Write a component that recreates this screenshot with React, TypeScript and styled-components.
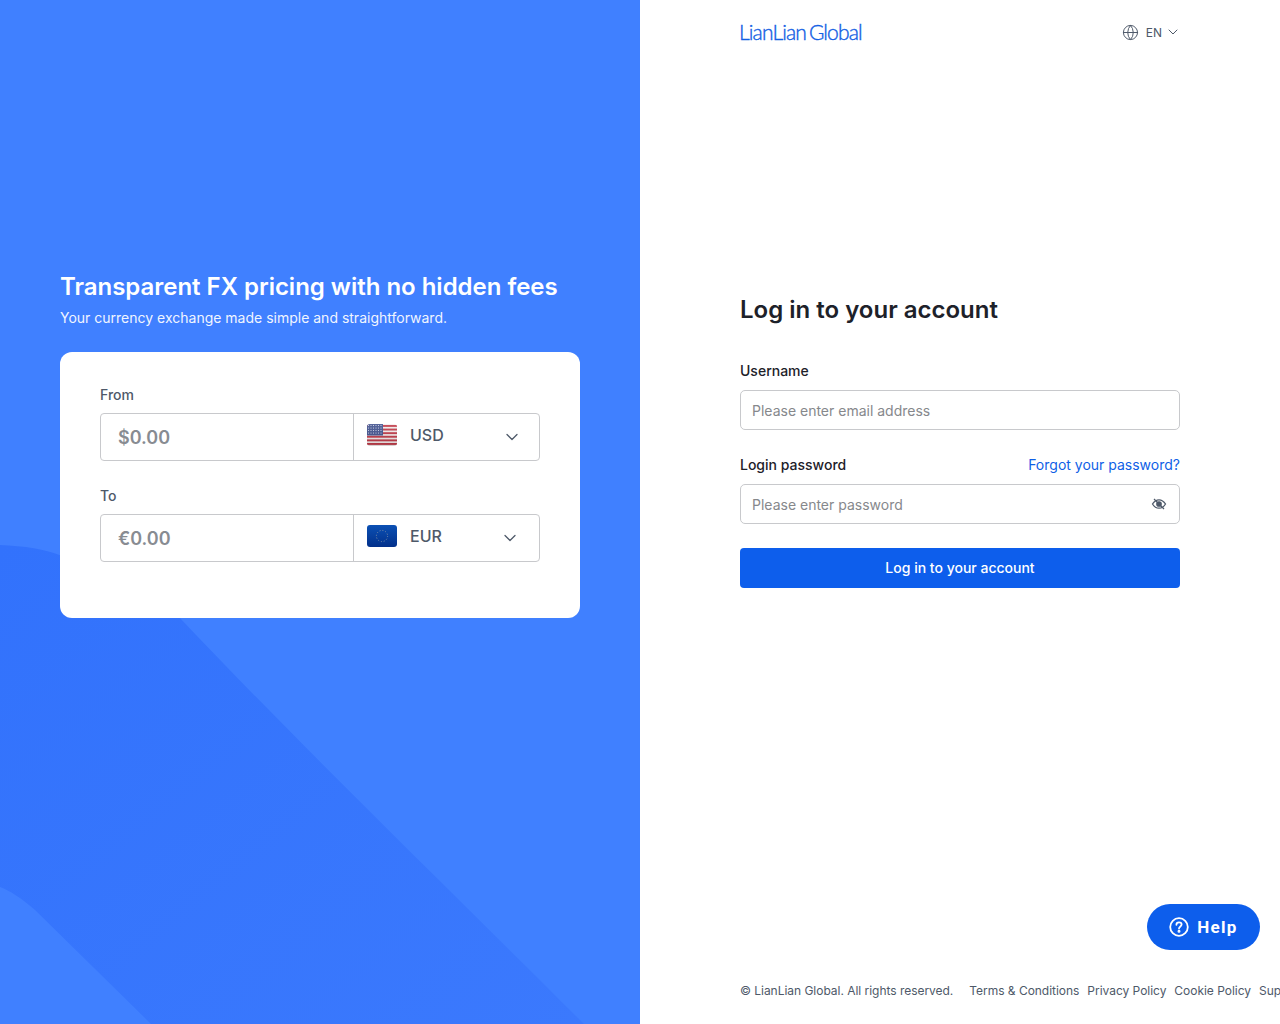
import React from "react";
import styled, {createGlobalStyle} from "styled-components";
import {ChevronDown, Globe} from "lucide-react";

const GlobalStyle = createGlobalStyle`
    html, body {
        margin: 0;
        padding: 0;
        background: #fff;
    }
    body {
        font-family: Inter, "Liberation Sans", sans-serif;
        overflow: hidden;
    }
    * {
        box-sizing: border-box;
    }
`;

const Page = styled.div`
    display: grid;
    grid-template-columns: 640px 640px;
    width: 1280px;
    height: 1024px;
    overflow: hidden;
    position: relative;
`;

const LeftPanel = styled.section`
    position: relative;
    background: #4080ff;
    padding: 272px 60px 0;
    overflow: hidden;
`;

const Backdrop = styled.svg`
    position: absolute;
    left: 0;
    top: 0;
`;

const LeftContent = styled.div`
    position: relative;
`;

const Headline = styled.h2`
    margin: 0;
    color: #fff;
    font-size: 24px;
    line-height: 30px;
    font-weight: 600;
    letter-spacing: -0.02px;
`;

const SubHeadline = styled.p`
    margin: 5px 0 0;
    color: #fff;
    font-size: 14px;
    line-height: 22px;
    opacity: 0.92;
`;

const ConverterCard = styled.div`
    margin-top: 23px;
    width: 520px;
    height: 266px;
    background: #fff;
    border-radius: 12px;
    padding: 33px 40px 0;
`;

const FieldLabel = styled.div`
    color: #4e5969;
    font-size: 14px;
    font-weight: 500;
    line-height: 20px;
    margin-bottom: 8px;
`;

const AmountRow = styled.div`
    display: flex;
    height: 48px;
    border: 1px solid #c8c9cc;
    border-radius: 4px;
    margin-bottom: 25px;
`;

const Amount = styled.div`
    width: 253px;
    padding-left: 17px;
    font-size: 18px;
    font-weight: 600;
    line-height: 47px;
    color: #888c92;
    border-right: 1px solid #c8c9cc;
`;

const CurrencySelect = styled.div<{$pad: number}>`
    flex: 1;
    display: flex;
    align-items: center;
    padding: 0 ${p => p.$pad}px 4px 13px;
    color: #4e5969;
    font-size: 16px;
    font-weight: 500;
`;

const CurrencyCode = styled.span`
    margin-left: 13px;
    flex: 1;
`;

const ChevronSlot = styled.span`
    display: flex;
    padding-top: 4px;
    color: #4e5969;
`;

const FlagBox = styled.svg`
    display: block;
    border-radius: 3px;
`;

const RightPanel = styled.section`
    background: #fff;
    padding: 0 100px;
    min-width: 0;
    display: flex;
    flex-direction: column;
    position: relative;
`;

const TopBar = styled.header`
    height: 64px;
    display: flex;
    align-items: center;
    justify-content: space-between;
`;

const Logo = styled.span`
    color: #145fe4;
    font-family: Lato, sans-serif;
    font-size: 21px;
    font-weight: 300;
    letter-spacing: -0.85px;
    word-spacing: -2px;
    margin: 0 0 2px -1px;
    -webkit-text-stroke: 0.4px #145fe4;
`;

const LangSwitch = styled.div`
    display: flex;
    align-items: center;
    color: #4e5969;
    font-size: 12px;
    font-weight: 400;
    margin-right: -1px;
`;

const LangText = styled.span`
    margin: 0 3px 0 7px;
`;

const Title = styled.h1`
    margin: 229px 0 0;
    color: #1d2129;
    font-size: 24px;
    line-height: 34px;
    font-weight: 600;
`;

const LabelRow = styled.div<{$top: number}>`
    display: flex;
    justify-content: space-between;
    align-items: center;
    margin: ${p => p.$top}px 0 9px;
    height: 20px;
    font-size: 14px;
    font-weight: 500;
    color: #1d2129;
`;

const ForgotLink = styled.a`
    color: #0f5fe6;
    font-weight: 400;
    text-decoration: none;
`;

const InputBox = styled.div`
    height: 40px;
    margin-top: 1px;
    border: 1px solid #c8c9cc;
    border-radius: 5px;
    padding: 0 11px;
    display: flex;
    align-items: center;
    justify-content: space-between;
    color: #86888c;
    font-size: 14px;
`;

const EyeIcon = styled.svg`
    margin-right: 1px;
    display: block;
`;

const SubmitButton = styled.button`
    margin-top: 24px;
    height: 40px;
    width: 100%;
    border: 0;
    border-radius: 4px;
    padding: 0 0 2px;
    background: #0d5eec;
    color: #fff;
    font-family: inherit;
    font-size: 14px;
    font-weight: 500;
`;

const Footer = styled.footer`
    position: absolute;
    left: 100px;
    top: 982px;
    display: flex;
    white-space: nowrap;
    color: #4e5969;
    font-size: 12px;
    line-height: 18px;
    letter-spacing: -0.03px;
`;

const Copyright = styled.span`
    margin-right: 16px;
`;

const FooterLink = styled.a`
    margin-right: 8px;
`;

const HelpButton = styled.button`
    position: absolute;
    right: 20px;
    top: 904px;
    width: 113px;
    height: 46px;
    border: 0;
    border-radius: 23px;
    background: #0d5eec;
    color: #fff;
    display: flex;
    align-items: center;
    justify-content: center;
    gap: 8px;
    font-family: Roboto, sans-serif;
    font-size: 17px;
    font-weight: 700;
    letter-spacing: 1.3px;
`;

const UsFlag = () => (
    <FlagBox width="30" height="22" viewBox="0 0 30 22">
        <defs>
            <linearGradient id="usShade" x1="0" y1="0" x2="0" y2="1">
                <stop offset="0" stopColor="#fff" stopOpacity="0.12"/>
                <stop offset="1" stopColor="#000" stopOpacity="0.12"/>
            </linearGradient>
        </defs>
        <rect width="30" height="22" fill="#f6eeee"/>
        {[0, 1, 2, 3, 4, 5].map(i => (
            <rect key={i} y={i * 3.6 + 1} width="30" height="1.9" fill="#c23a48"/>
        ))}
        <rect width="16" height="11.5" fill="#41528f"/>
        {[1.5, 4, 6.5, 9].map(y => [1.5, 4, 6.5, 9, 11.5, 14].map(x => (
            <circle key={`${x}-${y}`} cx={x} cy={y} r="0.55" fill="#dfe3f2"/>
        )))}
        <rect width="30" height="22" fill="url(#usShade)"/>
    </FlagBox>
);

const EuFlag = () => (
    <FlagBox width="30" height="22" viewBox="0 0 30 22">
        <defs>
            <linearGradient id="euBlue" x1="0" y1="0" x2="0" y2="1">
                <stop offset="0" stopColor="#0b50b4"/>
                <stop offset="1" stopColor="#02308a"/>
            </linearGradient>
        </defs>
        <rect width="30" height="22" fill="url(#euBlue)"/>
        <circle cx="15" cy="11" r="5.6" fill="none" stroke="#7d8fa8" strokeWidth="1" strokeDasharray="1 1.9"/>
    </FlagBox>
);

const App = () => {
    return (
        <Page>
            <GlobalStyle/>
            <LeftPanel>
                <Backdrop width="640" height="1024" viewBox="0 0 640 1024">
                    <defs>
                        <linearGradient id="wave" x1="0" y1="0" x2="1" y2="1">
                            <stop offset="0" stopColor="#3272fc"/>
                            <stop offset="1" stopColor="#3b79fd"/>
                        </linearGradient>
                    </defs>
                    <path
                        d="M0 545 C 25 546 45 549 62 556 L 180 618 C 300 745 460 900 584 1024 L 151 1024 L 35 910 C 20 897 10 891 0 887 Z"
                        fill="url(#wave)"
                    />
                </Backdrop>
                <LeftContent>
                    <Headline>Transparent FX pricing with no hidden fees</Headline>
                    <SubHeadline>Your currency exchange made simple and straightforward.</SubHeadline>
                    <ConverterCard>
                        <FieldLabel>From</FieldLabel>
                        <AmountRow>
                            <Amount>$0.00</Amount>
                            <CurrencySelect $pad={17}>
                                <UsFlag/>
                                <CurrencyCode>USD</CurrencyCode>
                                <ChevronSlot><ChevronDown size={20} strokeWidth={1.5}/></ChevronSlot>
                            </CurrencySelect>
                        </AmountRow>
                        <FieldLabel>To</FieldLabel>
                        <AmountRow>
                            <Amount>€0.00</Amount>
                            <CurrencySelect $pad={19}>
                                <EuFlag/>
                                <CurrencyCode>EUR</CurrencyCode>
                                <ChevronSlot><ChevronDown size={20} strokeWidth={1.5}/></ChevronSlot>
                            </CurrencySelect>
                        </AmountRow>
                    </ConverterCard>
                </LeftContent>
            </LeftPanel>
            <RightPanel>
                <TopBar>
                    <Logo>LianLian Global</Logo>
                    <LangSwitch>
                        <Globe size={17} strokeWidth={1.4}/>
                        <LangText>EN</LangText>
                        <ChevronDown size={16} strokeWidth={1.5}/>
                    </LangSwitch>
                </TopBar>
                <Title>Log in to your account</Title>
                <LabelRow $top={33}>Username</LabelRow>
                <InputBox>Please enter email address</InputBox>
                <LabelRow $top={24}>
                    Login password
                    <ForgotLink>Forgot your password?</ForgotLink>
                </LabelRow>
                <InputBox>
                    Please enter password
                    <EyeIcon width="16" height="16" viewBox="0 0 16 16" fill="none" stroke="#4e5969" strokeWidth="1.3">
                        <path d="M1.5 8 C 3.5 4.8 5.8 3.8 8 3.8 C 10.2 3.8 12.5 4.8 14.5 8 C 12.5 11.2 10.2 12.2 8 12.2 C 5.8 12.2 3.5 11.2 1.5 8 Z"/>
                        <circle cx="8" cy="8" r="2.2" fill="#4e5969"/>
                        <path d="M3 3 L13 13"/>
                    </EyeIcon>
                </InputBox>
                <SubmitButton>Log in to your account</SubmitButton>
                <Footer>
                    <Copyright>© LianLian Global. All rights reserved.</Copyright>
                    <FooterLink>Terms &amp; Conditions</FooterLink>
                    <FooterLink>Privacy Policy</FooterLink>
                    <FooterLink>Cookie Policy</FooterLink>
                    <FooterLink>Support</FooterLink>
                </Footer>
                <HelpButton>
                    <svg width="20" height="20" viewBox="0 0 20 20" fill="none" stroke="#fff" strokeWidth="1.8">
                        <circle cx="10" cy="10" r="8.8"/>
                        <path d="M7.4 7.8 C 7.4 6.2 8.6 5.4 10 5.4 C 11.5 5.4 12.6 6.3 12.6 7.6 C 12.6 9.4 10 9.5 10 11.6" strokeLinecap="round"/>
                        <circle cx="10" cy="14.3" r="0.6" fill="#fff"/>
                    </svg>
                    Help
                </HelpButton>
            </RightPanel>
        </Page>
    );
};

export default App;
